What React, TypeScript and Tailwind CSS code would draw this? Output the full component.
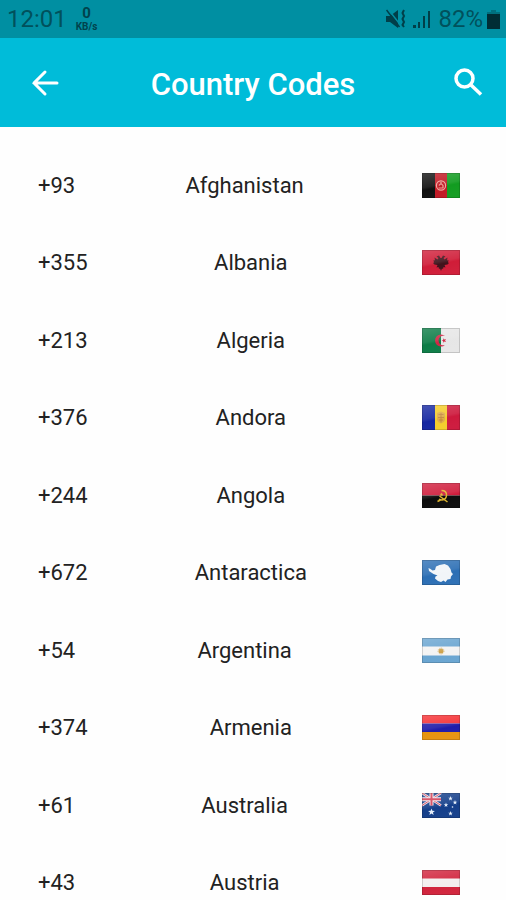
import React from "react";

type Country = {
  code: string;
  name: string;
  flag: React.ReactNode;
};

const star = "M0-2 .5-.7 1.9-.6.8.3 1.2 1.7 0 .9-1.2 1.7-.8.3-1.9-.6-.5-.7Z";

const countries: Country[] = [
  {
    code: "+93",
    name: "Afghanistan",
    flag: (
      <>
        <path fill="#0c0c0c" d="M0 0h13v25H0z" />
        <path fill="#c01420" d="M13 0h12v25H13z" />
        <path fill="#0d9a1c" d="M25 0h13v25H25z" />
        <g fill="none" stroke="#eea49b" strokeWidth="1.2">
          <circle cx="19" cy="12.5" r="4.6" />
          <path d="M16.500 15h5M17 12.500q2-3 4 0v2.500M19 9v2" />
        </g>
      </>
    ),
  },
  {
    code: "+355",
    name: "Albania",
    flag: (
      <>
        <path fill="#cf1834" d="M0 0h38v25H0z" />
        <path
          fill="#3d0e17"
          d="M18.500 8 17 5.500l-2.500 1 2 1.500-1 1.500-3-2 .5 3-1.500-.5.5 2.500-1 .5 1.500 1.500 3 .5-1 2.500 2-.5.5 2 1-.5 1 2.500 1-2.500 1 .5.5-2 2 .5-1-2.500 3-.5 1.500-1.500-1-.5.5-2.500-1.500.5.5-3-3 2-1-1.500 2-1.500-2.500-1L19.500 8Z"
        />
      </>
    ),
  },
  {
    code: "+213",
    name: "Algeria",
    flag: (
      <>
        <path fill="#087a43" d="M0 0h19v25H0z" />
        <path fill="#e6e6e6" d="M19 0h19v25H19z" />
        <path
          fill="#d02442"
          d="M23 8a6 6 0 1 0 0 9 4.800 4.800 0 1 1 0-9Z"
        />
        <path
          fill="#d02442"
          transform="translate(22 12.500) rotate(-90) scale(1.200)"
          d={star}
        />
      </>
    ),
  },
  {
    code: "+376",
    name: "Andora",
    flag: (
      <>
        <path fill="#10229f" d="M0 0h13v25H0z" />
        <path fill="#f4cb27" d="M13 0h12v25H13z" />
        <path fill="#cc1539" d="M25 0h13v25H25z" />
        <path fill="#dfaa45" d="M15 8l4-1.500L23 8v7q-1 3-4 3.500-3-.5-4-3.500Z" />
        <path
          fill="none"
          stroke="#bd7f38"
          strokeWidth=".8"
          d="M19 8v9.500M16 12.500h6M16.500 9.500h5M17 15h4"
        />
      </>
    ),
  },
  {
    code: "+244",
    name: "Angola",
    flag: (
      <>
        <path fill="#cf1838" d="M0 0h38v12.500H0z" />
        <path fill="#080808" d="M0 12.500h38V25H0z" />
        <g fill="none" stroke="#dfb52b" strokeWidth="1.500">
          <path d="M19.500 7.500q5 0 5 4.500t-4.500 5q-2 0-3-1" />
          <path d="m17.500 13 8 6M15.500 18.500l3-1.500" />
        </g>
        <path fill="#dfb52b" transform="translate(19.500 11.500)" d={star} />
      </>
    ),
  },
  {
    code: "+672",
    name: "Antaractica",
    flag: (
      <>
        <path fill="#286cb3" d="M0 0h38v25H0z" />
        <path
          fill="#f1f5f8"
          d="M6.500 8l2 1 2 1.500 2.500-.5 1-3.500L17.500 5l5-1 3.500 1.500 2.500 3.500 1 3.500L31 14l-2 2.500-.5 2.500-3 .5-2 2.500-2-1.500-2.500 1.500-3-1-3-2.500.5-2 2-1-4-1.500L7 11Z"
        />
      </>
    ),
  },
  {
    code: "+54",
    name: "Argentina",
    flag: (
      <>
        <path fill="#66a3d0" d="M0 0h38v25H0z" />
        <path fill="#f3f3f3" d="M0 8.500h38v9H0z" />
        <circle cx="19" cy="13" r="2.500" fill="#cda14b" />
        <circle
          cx="19"
          cy="13"
          r="3"
          fill="none"
          stroke="#dab873"
          strokeDasharray="1 1"
        />
      </>
    ),
  },
  {
    code: "+374",
    name: "Armenia",
    flag: (
      <>
        <path fill="#f62b2f" d="M0 0h38v8.500H0z" />
        <path fill="#1c18a8" d="M0 8.500h38V17H0z" />
        <path fill="#e5910b" d="M0 17h38v8H0z" />
      </>
    ),
  },
  {
    code: "+61",
    name: "Australia",
    flag: (
      <>
        <path fill="#103b88" d="M0 0h38v25H0z" />
        <path stroke="#e9dfe8" strokeWidth="2.500" d="m0 0 19 12.500M19 0 0 12.500" />
        <path stroke="#d2445a" d="m0 0 19 12.500M19 0 0 12.500" />
        <path stroke="#f1e8ed" strokeWidth="4" d="M9.500 0v12.500M0 6.300h19" />
        <path stroke="#d23a51" strokeWidth="2" d="M9.500 0v12.500M0 6.300h19" />
        <g fill="#e5effb">
          <path transform="translate(9.500 19) scale(1.800)" d={star} />
          <path transform="translate(28.500 5.500) scale(1.200)" d={star} />
          <path transform="translate(24 12) scale(1.200)" d={star} />
          <path transform="translate(33 9.500) scale(1.200)" d={star} />
          <path transform="translate(28.500 20.500) scale(1.200)" d={star} />
          <circle cx="30.500" cy="14" r=".8" />
        </g>
      </>
    ),
  },
  {
    code: "+43",
    name: "Austria",
    flag: (
      <>
        <path fill="#d01f38" d="M0 0h38v25H0z" />
        <path fill="#f3eeee" d="M0 8.500h38v8.500H0z" />
      </>
    ),
  },
];

const Flag = ({ name, children }: { name: string; children: React.ReactNode }) => (
  <svg
    role="img"
    aria-label={`Flag of ${name}`}
    viewBox="0 0 38 25"
    className="mx-2 h-[25px] w-[38px] shrink-0"
  >
    <defs>
      <linearGradient id={`gloss-${name}`} x1="0" y1="0" x2=".3" y2="1">
        <stop offset="0" stopColor="#fff" stopOpacity=".22" />
        <stop offset=".55" stopColor="#fff" stopOpacity=".1" />
        <stop offset=".65" stopColor="#fff" stopOpacity=".02" />
        <stop offset="1" stopColor="#fff" stopOpacity=".04" />
      </linearGradient>
    </defs>
    {children}
    <path fill={`url(#gloss-${name})`} d="M0 0h38v25H0z" />
    <path fill="none" stroke="#000" strokeOpacity=".15" d="M.5.5h37v24H.5z" />
  </svg>
);

const StatusBar = () => (
  <div className="flex h-[38px] shrink-0 items-center bg-[#008fa2] pl-[7px] pr-1.5 text-[#00515c]">
    <span className="text-2xl">12:01</span>
    <div className="ml-[9px] flex flex-col items-center font-bold text-[#00434d]">
      <span className="text-[15px] leading-[15px]">0</span>
      <span className="text-[10px] leading-[11px]">KB/s</span>
    </div>
    <div className="ml-auto flex items-center text-[#003f49]">
      <svg viewBox="0 0 20 20" className="h-5 w-5" aria-hidden="true">
        <path fill="currentColor" d="M0 7h4l8-6v18l-8-6H0z" />
        <path stroke="#008fa2" strokeWidth="1.500" d="m2 0 14 18" />
        <path stroke="currentColor" strokeWidth="1.500" d="m.5 1 13 17" />
        <path
          fill="none"
          stroke="currentColor"
          strokeWidth="2"
          d="M18 1l-1.500 3L18 7l-1.500 3 1.500 3-1.500 3 1.500 2"
        />
      </svg>
      <svg viewBox="0 0 18 19" className="ml-[7px] h-[19px] w-[18px]" aria-hidden="true">
        <path
          fill="currentColor"
          d="M0 15h3v3H0zM5 12h2v6H5zM10 6h2v12h-2zM15 1h2v17h-2z"
        />
      </svg>
      <span className="ml-[7px] text-2xl text-[#00515c]">82%</span>
      <svg viewBox="0 0 13 19" className="ml-1 h-[19px] w-[13px]" aria-hidden="true">
        <path fill="#00707f" d="M4 0h5v2h4v4H0V2h4z" />
        <path fill="#002d35" d="M0 4h13v15H0z" />
      </svg>
    </div>
  </div>
);

const App: React.FC = () => {
  return (
    <div className="flex h-screen flex-col overflow-hidden bg-[#fefefe] font-[Roboto,sans-serif]">
      <StatusBar />
      <header className="flex h-[89px] shrink-0 items-center bg-[#00bcd9] pl-7 pr-5 text-white">
        <button type="button" aria-label="Back" className="flex h-9 w-9 items-center justify-center">
          <svg
            viewBox="0 0 36 36"
            className="h-9 w-9"
            fill="none"
            stroke="currentColor"
            strokeWidth="3"
            strokeLinecap="round"
          >
            <path d="M29 18H6M17 7 6 18l11 11" />
          </svg>
        </button>
        <h1 className="mr-2 flex-1 pt-1 text-center text-[31px] leading-9 font-medium">
          Country Codes
        </h1>
        <button type="button" aria-label="Search" className="flex h-9 w-9 items-center justify-center">
          <svg
            viewBox="0 0 36 36"
            className="h-9 w-9"
            fill="none"
            stroke="currentColor"
            strokeWidth="3.5"
          >
            <circle cx="14.500" cy="13.500" r="8.500" />
            <path d="m20.500 19.500 10.500 10" />
          </svg>
        </button>
      </header>
      <ul className="min-h-0 flex-1 overflow-y-auto pt-[19px] [scrollbar-width:none]">
        {countries.map((country) => (
          <li
            key={country.code}
            className="flex items-center justify-between px-[38px] text-[22px] text-[#222] odd:h-[78px] even:h-[77px]"
          >
            <span>{country.code}</span>
            <span>{country.name}</span>
            <Flag name={country.name}>{country.flag}</Flag>
          </li>
        ))}
      </ul>
    </div>
  );
};

export default App;
